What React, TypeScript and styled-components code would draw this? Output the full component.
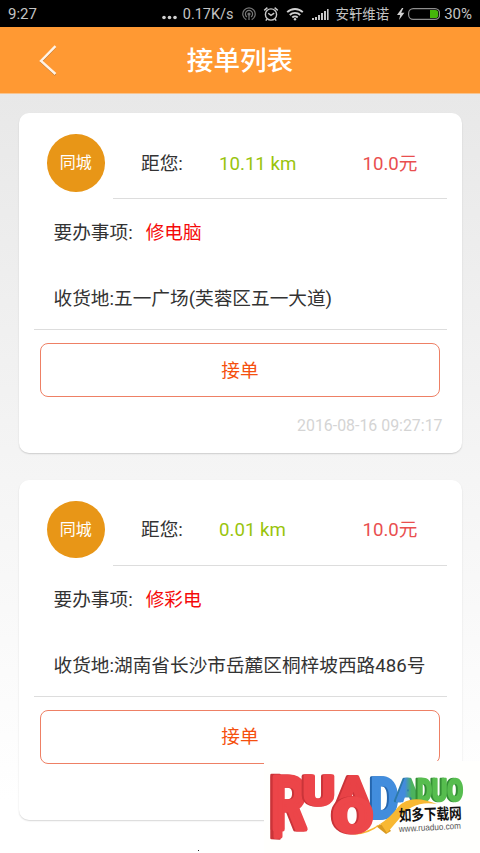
import styled, { createGlobalStyle } from 'styled-components';

interface Order {
  type: string;
  distance: string;
  price: string;
  task: string;
  address: string;
  time: string;
}

const orders: Order[] = [
  {
    type: '同城',
    distance: '10.11 km',
    price: '10.0元',
    task: '修电脑',
    address: '五一广场(芙蓉区五一大道)',
    time: '2016-08-16 09:27:17',
  },
  {
    type: '同城',
    distance: '0.01 km',
    price: '10.0元',
    task: '修彩电',
    address: '湖南省长沙市岳麓区桐梓坡西路486号',
    time: '',
  },
];

const GlobalStyle = createGlobalStyle`
  * {
    box-sizing: border-box;
  }
  body {
    margin: 0;
    font-family: Roboto, 'Noto Sans CJK SC', sans-serif;
  }
`;

const Page = styled.div`
  position: relative;
  display: flex;
  flex-direction: column;
  width: 480px;
  height: 853px;
  overflow: hidden;
  background: linear-gradient(#e8e8e8 93px, #f5f5f5 480px, #fff 800px);
`;

const StatusBar = styled.div`
  display: flex;
  align-items: center;
  height: 27px;
  flex-shrink: 0;
  padding: 1px 8px 0 8px;
  background: #000;
  color: #c4c4c4;
  font-size: 15px;
  line-height: 20px;
  white-space: nowrap;
`;

const StatusGroup = styled.div`
  display: flex;
  align-items: center;
  margin-left: auto;

  svg {
    display: block;
    flex-shrink: 0;
  }
`;

const Carrier = styled.span`
  margin: 0 8px 0 7px;
  padding-top: 1px;
  font-size: 13.4px;
  line-height: 18px;
`;

const Speed = styled.span`
  margin: 0 8px 0 6px;
  padding-top: 1px;
  font-size: 14.5px;
`;

const Header = styled.header`
  display: grid;
  grid-template-columns: 96px 1fr 96px;
  align-items: center;
  height: 67px;
  flex-shrink: 0;
  background: #ff9933;
  border-bottom: 1px solid #f8c48f;
`;

const BackButton = styled.button`
  display: flex;
  justify-content: center;
  padding: 0;
  border: 0;
  background: none;
`;

const Title = styled.h1`
  margin: 0;
  padding-top: 2px;
  color: #fff;
  font-size: 26.6px;
  font-weight: 500;
  line-height: 64px;
  text-align: center;
`;

const List = styled.main`
  display: flex;
  flex-direction: column;
  gap: 26.6px;
  padding: 19px 18.5px 0 18.5px;
`;

const Card = styled.article`
  height: 340px;
  border-radius: 10px;
  background: #fff;
  box-shadow: 0 1px 1.5px rgba(0, 0, 0, 0.16);
  color: #333;
  font-size: 18.67px;
`;

const CardTop = styled.div`
  display: flex;
  height: 86px;
  padding: 0 15px 0 28.5px;
`;

const Badge = styled.div`
  width: 57.5px;
  height: 57.5px;
  margin: 21px 8px 0 0;
  border-radius: 50%;
  background: #e89617;
  color: #fff;
  font-size: 16px;
  line-height: 58px;
  text-align: center;
`;

const Summary = styled.div`
  display: grid;
  grid-template-columns: 78px 1fr auto;
  align-items: center;
  flex: 1;
  padding: 16px 29px 0 28.5px;
  border-bottom: 1px solid #ddd;
  line-height: 28px;
`;

const Distance = styled.span`
  color: #99c40c;
`;

const Price = styled.span`
  color: #e94f4f;
`;

const Details = styled.div`
  margin: 0 14.5px 0 15px;
  padding: 1px 20px 0;
  height: 131px;
  border-bottom: 1px solid #ddd;
`;

const DetailRow = styled.div`
  height: 66px;
  line-height: 66px;
  white-space: nowrap;
`;

const Task = styled.span`
  margin-left: 13px;
  color: #f50a0a;
`;

const AcceptButton = styled.button`
  display: block;
  width: 400px;
  height: 54px;
  margin: 13px 0 0 21.5px;
  padding: 0 0 4px;
  border: 1px solid #ee8065;
  border-radius: 8px;
  background: #fff;
  color: #f5500f;
  font: inherit;
`;

const Time = styled.time`
  display: block;
  margin: 19px 19px 0 0;
  color: #d4d4d4;
  font-size: 15.9px;
  line-height: 20px;
  text-align: right;
`;

const Watermark = styled.div`
  position: absolute;
  left: 264px;
  top: 761px;
  width: 216px;
  height: 92px;
  background: #fffffd;

  svg {
    display: block;
  }
`;

const Speck = styled.i`
  position: absolute;
  left: 198px;
  top: 850px;
  width: 1px;
  height: 1px;
  background: #222;
`;

const MoreIcon = () => (
  <svg width="15" height="15" viewBox="0 0 15 15" fill="#d0d0d0">
    <circle cx="2" cy="10.5" r="1.8" />
    <circle cx="7.5" cy="10.5" r="1.8" />
    <circle cx="13" cy="10.5" r="1.8" />
  </svg>
);

const HotspotIcon = () => (
  <svg width="14" height="14" viewBox="0 0 14 14" fill="none" stroke="#777" strokeWidth="1.2">
    <path d="M4.3 12.6a6.2 6.2 0 1 1 5.4 0" />
    <path d="M4.9 9.9a3.6 3.6 0 1 1 4.2 0" />
    <circle cx="7" cy="7" r="1" fill="#777" />
    <path d="M7 8v5" />
  </svg>
);

const AlarmIcon = () => (
  <svg width="16" height="16" viewBox="0 0 16 16" fill="none" stroke="#c8c8c8" strokeWidth="1.4">
    <circle cx="8" cy="8.5" r="5.6" />
    <path d="M5.2 7.2L8 9.4l3.2-2.2M1.2 4.4L4.4 1.6M14.8 4.4l-3.2-2.8M4 13l-1.2 1.6M12 13l1.2 1.6" />
  </svg>
);

const WifiIcon = () => (
  <svg width="18" height="14" viewBox="0 0 18 14" fill="none" stroke="#d0d0d0" strokeWidth="1.9">
    <path d="M1.2 5.2a11 11 0 0 1 15.6 0M3.8 8a7.4 7.4 0 0 1 10.4 0M6.3 10.5a3.9 3.9 0 0 1 5.4 0" />
    <circle cx="9" cy="12.3" r="1.2" fill="#d0d0d0" stroke="none" />
  </svg>
);

const SignalIcon = () => (
  <svg width="17" height="12" viewBox="0 0 17 12" fill="#c8c8c8">
    <path d="M0 10h2v2H0zM3 9h2v3H3zM6 7h2v5H6zM9 5h2v7H9zM12 3h2v9h-2zM15 1h1.6v11H15z" />
  </svg>
);

const BatteryIcon = () => (
  <svg width="43" height="14" viewBox="0 0 43 14">
    <path d="M5 1L0 8h3.2L2 13l5.4-7.2H4.2L6.4 1z" fill="#d0d0d0" />
    <rect x="11.6" y="1.6" width="31" height="10.8" rx="4.6" fill="none" stroke="#8e8e8e" strokeWidth="1.2" />
    <path d="M33 3h5.4q2.8 0 2.8 2.8v2.4q0 2.8-2.8 2.8H33z" fill="#45b50a" />
  </svg>
);

const BackIcon = () => (
  <svg width="18" height="32" viewBox="0 0 18 32" fill="none">
    <path d="M16.5 3.2L2 18l14.5 13" stroke="#b77435" strokeWidth="1.8" />
    <path d="M16.5 2.2L2 17l14.5 13" stroke="#fff3e6" strokeWidth="2.4" />
  </svg>
);

// thick letter of the site logo, its side face comes from the drop shadow
const Letter = styled.text<{ $color: string; $side: string; $size: number; $thick?: number }>`
  fill: ${({ $color }) => $color};
  stroke: ${({ $color }) => $color};
  stroke-width: ${({ $thick = 5 }) => $thick}px;
  stroke-linejoin: round;
  font-family: Roboto, sans-serif;
  font-size: ${({ $size }) => $size}px;
  font-weight: 700;
  filter: drop-shadow(-1.2px 0.3px 0 ${({ $side }) => $side});
`;

const SiteLogo = () => (
  <svg width="216" height="92" viewBox="264 761 216 92">
    <defs>
      <linearGradient id="blueGreen">
        <stop offset="0.35" stopColor="#438bdc" />
        <stop offset="0.65" stopColor="#4cb35e" />
      </linearGradient>
    </defs>
    <path d="M271.5 775v63l8 .5V775z" fill="#ca3439" stroke="#ca3439" strokeWidth="2.5" strokeLinejoin="round" />
    <Letter x="271" y="829" textLength="36" lengthAdjust="spacingAndGlyphs" $size={73} $thick={5} $color="#ec4549" $side="#ca3439">R</Letter>
    <path d="M275.5 777v60l5-.5V777z" fill="#ec4549" stroke="#ec4549" strokeWidth="4" strokeLinejoin="round" />
    <Letter x="303" y="805" textLength="32" lengthAdjust="spacingAndGlyphs" $size={40} $thick={3.5} $color="#ec4549" $side="#ca3439">U</Letter>
    <Letter x="336" y="811" textLength="35" lengthAdjust="spacingAndGlyphs" $size={48} $thick={4} $color="#e84246" $side="#c93338">A</Letter>
    <path d="M376 826l9-3 6 8-5 3z" fill="#d99a20" />
    <Letter x="370.5" y="818" textLength="28" lengthAdjust="spacingAndGlyphs" $size={56} $thick={3.5} $color="#428ddd" $side="#2567af">D</Letter>
    <Letter x="397" y="801" textLength="22" lengthAdjust="spacingAndGlyphs" $size={32} $thick={2.5} $color="url(#blueGreen)" $side="#2d79a7">A</Letter>
    <Letter x="417" y="801" textLength="46" lengthAdjust="spacingAndGlyphs" $size={32} $thick={2.5} $color="#57bd4f" $side="#338e35">DUO</Letter>
    <path d="M352 835Q382 829 398 807Q410 793 437 804Q412 800 399 819L387 833L381 824Q369 835 352 835z" fill="#f8b832" />
    <Letter x="333.5" y="832" textLength="39" lengthAdjust="spacingAndGlyphs" $size={46} $thick={5} $color="#ed474a" $side="#c93338">O</Letter>
    <text
      x="399"
      y="821"
      textLength="63"
      lengthAdjust="spacingAndGlyphs"
      fontSize="15.5"
      fontWeight="700"
      fontFamily="'Noto Sans CJK SC', sans-serif"
      fill="#111"
      transform="rotate(-2 399 821)"
    >
      如多下载网
    </text>
    <text
      x="399"
      y="832"
      textLength="62"
      lengthAdjust="spacingAndGlyphs"
      fontSize="9"
      fontFamily="'Liberation Sans', sans-serif"
      fill="#555"
      transform="rotate(-3 399 832)"
    >
      www.ruaduo.com
    </text>
  </svg>
);

const OrderCard = ({ type, distance, price, task, address, time }: Order) => (
  <Card>
    <CardTop>
      <Badge>{type}</Badge>
      <Summary>
        <span>距您:</span>
        <Distance>{distance}</Distance>
        <Price>{price}</Price>
      </Summary>
    </CardTop>
    <Details>
      <DetailRow>
        要办事项:
        <Task>{task}</Task>
      </DetailRow>
      <DetailRow>收货地:{address}</DetailRow>
    </Details>
    <AcceptButton>接单</AcceptButton>
    {time && <Time>{time}</Time>}
  </Card>
);

const SpacedIcon = styled.span<{ $right: number }>`
  margin-right: ${({ $right }) => $right}px;
`;

export default function App() {
  return (
    <Page>
      <GlobalStyle />
      <StatusBar>
        <span>9:27</span>
        <StatusGroup>
          <MoreIcon />
          <Speed>0.17K/s</Speed>
          <SpacedIcon $right={7}><HotspotIcon /></SpacedIcon>
          <SpacedIcon $right={7}><AlarmIcon /></SpacedIcon>
          <SpacedIcon $right={8}><WifiIcon /></SpacedIcon>
          <SignalIcon />
          <Carrier>安轩维诺</Carrier>
          <SpacedIcon $right={4}><BatteryIcon /></SpacedIcon>
          <span>30%</span>
        </StatusGroup>
      </StatusBar>
      <Header>
        <BackButton aria-label="返回">
          <BackIcon />
        </BackButton>
        <Title>接单列表</Title>
      </Header>
      <List>
        {orders.map((order) => (
          <OrderCard key={order.task} {...order} />
        ))}
      </List>
      <Speck />
      <Watermark>
        <SiteLogo />
      </Watermark>
    </Page>
  );
}
